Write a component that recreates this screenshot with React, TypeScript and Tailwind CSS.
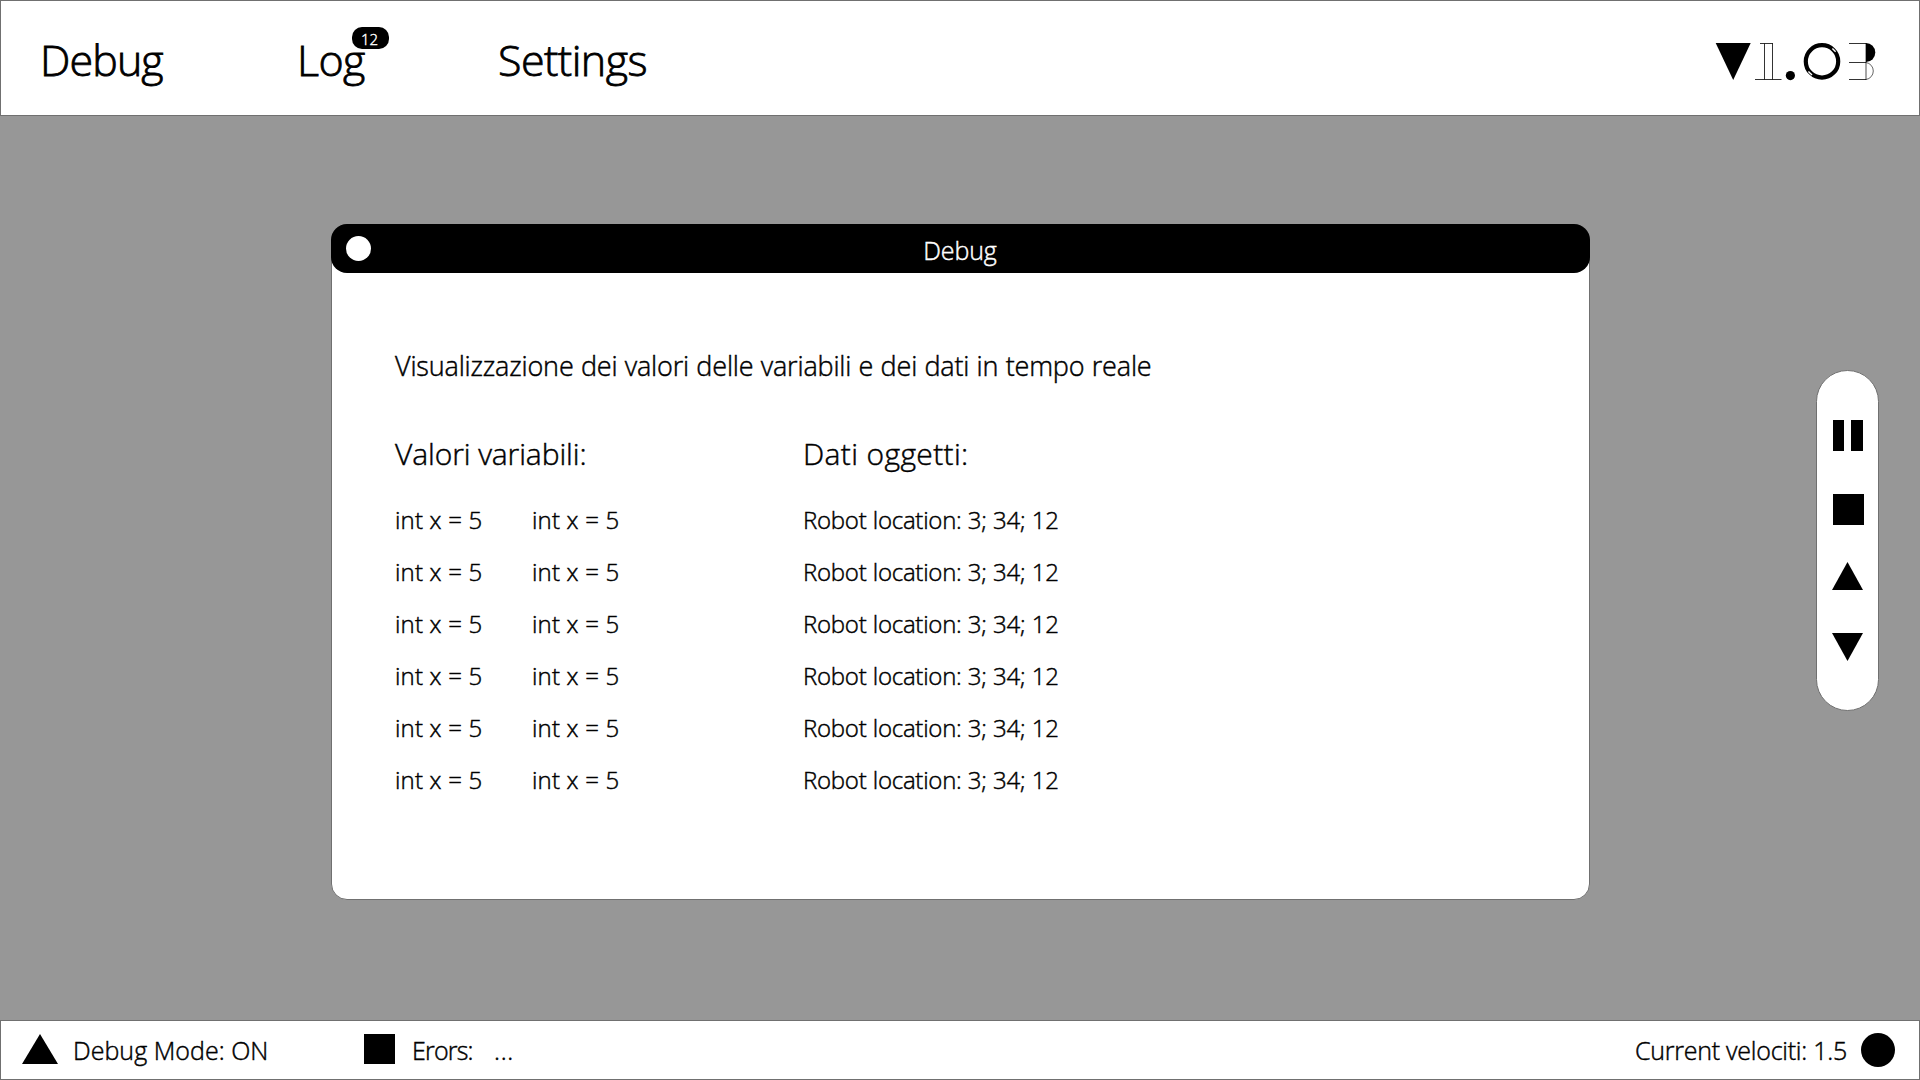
const rows = [0, 1, 2, 3, 4, 5];

function VersionMark() {
  return (
    <svg className="mt-[6px]" width="162" height="39" viewBox="0 0 162 39" role="img" aria-label="v1.03" fill="none" stroke="#000" strokeWidth="1">
      <polygon points="0.7,1 35.7,1 18.2,38" fill="#000" stroke="none" />
      <g strokeWidth="0.8">
        <line x1="45" y1="1.5" x2="58" y2="1.5" />
        <line x1="49.5" y1="1.5" x2="49.5" y2="37.5" />
        <line x1="57.5" y1="1.5" x2="57.5" y2="37.5" />
        <line x1="40" y1="37.5" x2="66.5" y2="37.5" />
      </g>
      <circle cx="75.4" cy="33.6" r="4.6" fill="#000" stroke="none" />
      <circle cx="107" cy="19.4" r="16.2" strokeWidth="4.2" />
      <line x1="117.4" y1="6.6" x2="120.6" y2="9.8" stroke="#fff" strokeWidth="1.4" />
      <line x1="93.4" y1="29.4" x2="97" y2="33" stroke="#fff" strokeWidth="1.4" />
      <g strokeWidth="0.8">
        <line x1="134" y1="1.5" x2="151" y2="1.5" />
        <line x1="134" y1="20.5" x2="151" y2="20.5" />
        <line x1="134" y1="37.5" x2="151" y2="37.5" />
        <path d="M151 1 A9.3 9.5 0 0 1 151 20 Z" fill="#000" stroke="none" />
        <line x1="151" y1="1" x2="151" y2="38" strokeWidth="0.7" />
        <path d="M151 20.5 A8.6 8.6 0 0 1 151 37.5" strokeWidth="0.6" />
      </g>
    </svg>
  );
}

export default function App() {
  return (
    <div className="flex h-[1080px] w-[1920px] flex-col overflow-hidden bg-[#979797] font-['Open_Sans',sans-serif] font-light text-black [-webkit-text-stroke:0.45px_currentColor]">
      <header className="flex h-[116px] items-center justify-between border border-[#707070] bg-white pr-[42px] pl-[39px]">
        <nav className="flex items-center pt-[4px] text-[43px] leading-[58px]">
          <a className="w-[257px] tracking-[-0.9px] [-webkit-text-stroke-width:0.8px]">Debug</a>
          <a className="relative w-[201px] tracking-[-0.65px] [-webkit-text-stroke-width:0.8px]">
            Log
            <span className="absolute -top-[4px] left-[55px] flex h-[22px] w-[37px] items-center justify-center rounded-[10px] bg-black pt-[2px] pr-[2px] text-[15px] leading-none tracking-normal text-white [-webkit-text-stroke-width:0.4px]">
              12
            </span>
          </a>
          <a className="tracking-[-0.54px] [-webkit-text-stroke-width:0.8px]">Settings</a>
        </nav>
        <VersionMark />
      </header>

      <main className="relative flex-1">
        <section className="mt-[108px] ml-[331px] h-[676px] w-[1259px] rounded-[16px] border border-[#707070] bg-white">
          <div className="-mx-px -mt-px grid h-[49px] grid-cols-[1fr_auto_1fr] items-center rounded-[16px] bg-black pl-[15px] text-white">
            <span className="-mt-px size-[25px] rounded-full bg-white" />
            <h1 className="-ml-[16px] pt-[2px] text-[25px] leading-[34px] tracking-[-0.1px]">Debug</h1>
          </div>
          <div className="px-[63px] pt-[75px]">
            <p className="text-[27px] leading-[36px] tracking-[-0.17px] [word-spacing:0.5px]">
              Visualizzazione dei valori delle variabili e dei dati in tempo reale
            </p>
            <div className="mt-[50px] flex">
              <div className="w-[408px]">
                <h2 className="text-[30px] leading-[40px] tracking-[-0.1px]">Valori variabili:</h2>
                <ul className="mt-[20px] text-[24px] leading-[52px] tracking-[0.19px]">
                  {rows.map((r) => (
                    <li key={r} className="flex">
                      <span className="w-[137px]">int x = 5</span>
                      <span>int x = 5</span>
                    </li>
                  ))}
                </ul>
              </div>
              <div>
                <h2 className="text-[30px] leading-[40px] tracking-[0.36px]">Dati oggetti:</h2>
                <ul className="mt-[20px] text-[24px] leading-[52px] tracking-[-0.25px] [word-spacing:0.3px]">
                  {rows.map((r) => (
                    <li key={r}>Robot location: 3; 34; 12</li>
                  ))}
                </ul>
              </div>
            </div>
          </div>
        </section>

        <aside className="absolute top-[254px] left-[1816px] flex h-[341px] w-[63px] flex-col items-center rounded-full border border-[#707070] bg-white pt-[49px]">
          <div className="ml-px flex h-[31px] w-[31px] gap-[7px]">
            <span className="w-[11px] bg-black" />
            <span className="w-[12px] bg-black" />
          </div>
          <span className="mt-[43px] ml-px size-[31px] bg-black" />
          <svg className="mt-[37px]" width="31" height="28" viewBox="0 0 31 28">
            <polygon points="15.5,0 31,28 0,28" />
          </svg>
          <svg className="mt-[43px]" width="31" height="28" viewBox="0 0 31 28">
            <polygon points="0,0 31,0 15.5,28" />
          </svg>
        </aside>
      </main>

      <footer className="flex h-[60px] items-center border border-[#707070] bg-white pr-[24px] pl-[21px] text-[25px] leading-[34px]">
        <div className="flex w-[342px] items-center">
          <svg className="-mt-[2px]" width="36" height="30" viewBox="0 0 36 30">
            <polygon points="18,0 36,30 0,30" />
          </svg>
          <span className="ml-[15px] tracking-[0.03px]">Debug Mode: ON</span>
        </div>
        <span className="-mt-[2px] h-[30px] w-[31px] bg-black" />
        <span className="-mt-px ml-[17px] w-[82px] tracking-[-0.8px]">Erors:</span>
        <span className="tracking-[0.7px]">...</span>
        <span className="ml-auto tracking-[-0.24px]">Current velociti: 1.5</span>
        <span className="-mt-px ml-[14px] size-[34px] rounded-full bg-black" />
      </footer>
    </div>
  );
}
